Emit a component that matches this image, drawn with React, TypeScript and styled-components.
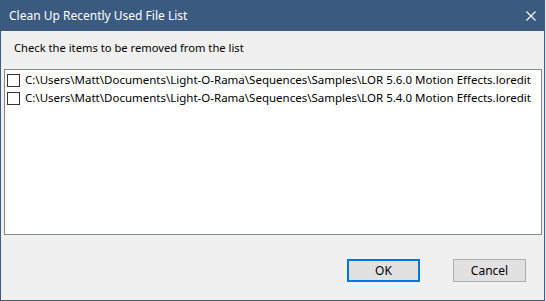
import styled, { createGlobalStyle } from "styled-components";

const GlobalStyle = createGlobalStyle`
  html, body {
    margin: 0;
    padding: 0;
    background: #f0f0f0;
  }
  body {
    font-family: "Noto Sans", "Liberation Sans", sans-serif;
    font-size: 12px;
  }
`;

const Window = styled.div`
  width: 545px;
  height: 301px;
  box-sizing: border-box;
  display: flex;
  flex-direction: column;
  background: #f0f0f0;
  border: 1px solid #3b5a80;
  border-top: none;
`;

const TitleBar = styled.div`
  height: 31px;
  flex: none;
  display: flex;
  align-items: center;
  justify-content: space-between;
  background: #3b5a80;
  color: #ffffff;
  padding: 0 9px 0 9px;
  margin: 0 -1px;
`;

const Title = styled.span`
  font-size: 12px;
  line-height: 16px;
`;

const CloseButton = styled.span`
  width: 10px;
  height: 10px;
  display: flex;
`;

const Body = styled.div`
  flex: 1;
  display: flex;
  flex-direction: column;
  padding: 9px 2px 0 3px;
`;

const Prompt = styled.div`
  color: #000000;
  font-size: 11.2px;
  line-height: 16px;
  padding-left: 10px;
  margin-bottom: 13px;
`;

const ListBox = styled.div`
  height: 166px;
  box-sizing: border-box;
  background: #ffffff;
  border: 1px solid #828790;
  padding: 1px 0 0 2px;
  overflow: hidden;
`;

const Row = styled.label`
  display: flex;
  align-items: center;
  height: 18px;
  color: #000000;
`;

const Box = styled.span`
  width: 13px;
  height: 13px;
  box-sizing: border-box;
  border: 1px solid #333333;
  background: #ffffff;
  margin-right: 5px;
  flex: none;
`;

const Path = styled.span`
  white-space: nowrap;
  font-size: 11.5px;
  line-height: 16px;
`;

const Footer = styled.div`
  display: flex;
  justify-content: flex-end;
  gap: 33px;
  padding: 24px 16px 0 0;
`;

const Button = styled.button<{ $primary?: boolean }>`
  width: 73px;
  height: 23px;
  box-sizing: border-box;
  background: #e1e1e1;
  border: ${(p) => (p.$primary ? "2px solid #0078d7" : "1px solid #adadad")};
  font-family: inherit;
  font-size: 12px;
  color: #000000;
  padding: 0;
`;

const files = [
  "C:\\Users\\Matt\\Documents\\Light-O-Rama\\Sequences\\Samples\\LOR 5.6.0 Motion Effects.loredit",
  "C:\\Users\\Matt\\Documents\\Light-O-Rama\\Sequences\\Samples\\LOR 5.4.0 Motion Effects.loredit",
];

const App: React.FC = () => {
  return (
    <>
      <GlobalStyle />
      <Window>
        <TitleBar>
          <Title>Clean Up Recently Used File List</Title>
          <CloseButton>
            <svg width="10" height="10" viewBox="0 0 10 10">
              <path d="M0.5 0.5 L9.5 9.5 M9.5 0.5 L0.5 9.5" stroke="#ffffff" strokeWidth="1.1" />
            </svg>
          </CloseButton>
        </TitleBar>
        <Body>
          <Prompt>Check the items to be removed from the list</Prompt>
          <ListBox>
            {files.map((f) => (
              <Row key={f}>
                <Box />
                <Path>{f}</Path>
              </Row>
            ))}
          </ListBox>
          <Footer>
            <Button $primary>OK</Button>
            <Button>Cancel</Button>
          </Footer>
        </Body>
      </Window>
    </>
  );
};

export default App;
